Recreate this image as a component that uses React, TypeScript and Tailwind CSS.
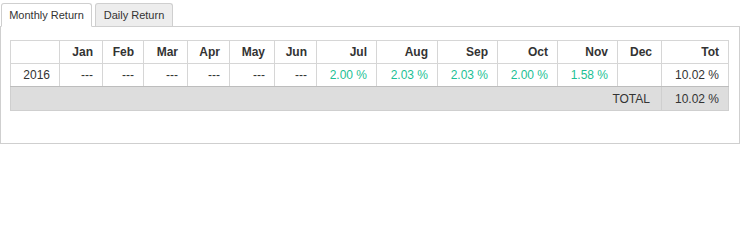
import React from "react";

const cols = [49, 43, 41, 44, 42, 45, 42, 60, 61, 60, 60, 60, 44, 67];
const heads = ["", "Jan", "Feb", "Mar", "Apr", "May", "Jun", "Jul", "Aug", "Sep", "Oct", "Nov", "Dec", "Tot"];
const row: { v: string; green?: boolean }[] = [
  { v: "2016" },
  { v: "---" },
  { v: "---" },
  { v: "---" },
  { v: "---" },
  { v: "---" },
  { v: "---" },
  { v: "2.00 %", green: true },
  { v: "2.03 %", green: true },
  { v: "2.03 %", green: true },
  { v: "2.00 %", green: true },
  { v: "1.58 %", green: true },
  { v: "" },
  { v: "10.02 %" },
];

export default function App() {
  return (
    <div
      className="w-[740px] bg-white text-[12px] text-[#333]"
      style={{ fontFamily: '"Liberation Sans", Arial, sans-serif' }}
    >
      <div className="flex items-end gap-[3px] pl-[1px] pt-[3px] h-[27px] border-b border-[#cfcfcf] text-[11px]">
        <div className="h-[24px] -mb-[1px] w-[91px] text-center pt-[5px] leading-[13px] bg-white border border-[#cfcfcf] border-b-white rounded-t-[3px]">
          Monthly Return
        </div>
        <div className="h-[23px] w-[78px] text-center pt-[5px] leading-[13px] bg-[#ededed] border border-[#cfcfcf] border-b-0 rounded-t-[3px]">
          Daily Return
        </div>
      </div>
      <div className="h-[117px] border border-t-0 border-[#cfcfcf] pl-[9px] pr-[9px] pt-[13px]">
        <table className="table-fixed border-collapse w-[719px] leading-[14px]">
          <colgroup>
            {cols.map((w, i) => (
              <col key={i} style={{ width: w }} />
            ))}
          </colgroup>
          <thead>
            <tr className="h-[23px]">
              {heads.map((h, i) => (
                <th
                  key={i}
                  className="border border-[#d6d6d6] text-right font-bold pr-[9px] py-0"
                >
                  {h}
                </th>
              ))}
            </tr>
          </thead>
          <tbody>
            <tr className="h-[23px]">
              {row.map((c, i) => (
                <td
                  key={i}
                  className={`border border-[#d6d6d6] border-b-[#bdbdbd] border-b-dotted text-right pr-[9px] py-0 ${
                    c.green ? "text-[#1cbf95]" : "text-[#333]"
                  }`}
                >
                  {c.v}
                </td>
              ))}
            </tr>
            <tr className="h-[24px] bg-[#dddddd]">
              <td
                colSpan={13}
                className="border border-[#cfcfcf] border-t-dotted border-t-[#bdbdbd] text-right pr-[11px] py-0"
              >
                TOTAL
              </td>
              <td className="border border-[#cfcfcf] border-t-dotted border-t-[#bdbdbd] text-right pr-[9px] py-0">
                10.02 %
              </td>
            </tr>
          </tbody>
        </table>
      </div>
    </div>
  );
}
